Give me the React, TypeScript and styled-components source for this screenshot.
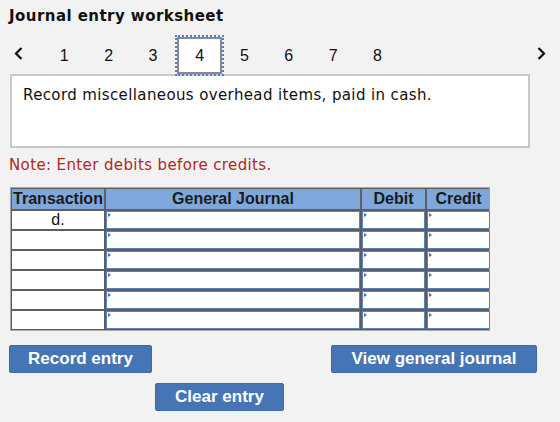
import styled, { createGlobalStyle } from 'styled-components';

const GlobalStyle = createGlobalStyle`
  html, body {
    margin: 0;
    padding: 0;
    background: #f2f2f2;
  }
  body {
    font-family: "DejaVu Sans", Verdana, sans-serif;
    color: #111;
  }
`;

const Page = styled.div`
  width: 560px;
  height: 422px;
  padding: 6px 0 0 0;
  box-sizing: border-box;
`;

const Title = styled.h1`
  margin: 0 0 0 9px;
  font-family: "DejaVu Sans", Verdana, sans-serif;
  font-size: 15px;
  font-weight: bold;
  letter-spacing: 0.45px;
  line-height: 20px;
  color: #111;
`;

const Nav = styled.div`
  display: flex;
  align-items: center;
  height: 37px;
  margin: 11px 0 0 0;
  padding: 0 12px 0 12px;
  font-family: "Liberation Sans", Arial, sans-serif;
`;

const Arrow = styled.span<{ $side: 'left' | 'right' }>`
  width: 30px;
  height: 37px;
  display: flex;
  align-items: center;
  justify-content: ${({ $side }) => ($side === 'left' ? 'flex-start' : 'flex-end')};
  padding: 0 2px 4px;
  box-sizing: border-box;
`;

const Steps = styled.div`
  display: flex;
  flex: 1;
`;

const Step = styled.div<{ $active?: boolean }>`
  width: 44.4px;
  height: 37px;
  display: flex;
  align-items: center;
  justify-content: center;
  font-size: 16px;
  color: #111;
  box-sizing: border-box;
  ${({ $active }) =>
    $active &&
    `
    background: #fff;
    border: 2px solid #8a8a8a;
    outline: 2px dotted #4f7fc4;
    width: 45px;
    margin: 0 0 0 2px;
  `}
`;

const Prompt = styled.div`
  margin: 0 30px 0 10px;
  height: 74px;
  box-sizing: border-box;
  background: #fff;
  border: 2px solid #c9c9c9;
  padding: 10px 11px;
  font-size: 15px;
  letter-spacing: 0.38px;
  line-height: 18px;
  color: #111;
`;

const Note = styled.p`
  margin: 8px 0 0 9px;
  font-size: 15px;
  letter-spacing: 0.38px;
  line-height: 18px;
  color: #b3271f;
`;

const Table = styled.div`
  margin: 13px 0 0 10px;
  width: 480px;
  box-sizing: border-box;
  display: grid;
  grid-template-columns: 92px 254px 63px 63px;
  grid-auto-rows: 18px;
  grid-template-rows: 20px;
  gap: 2px;
  padding: 1px;
  background: #5e5e5e;
  border: 1px solid #a9a9a9;
  font-family: "Liberation Sans", Arial, sans-serif;
`;

const Head = styled.div`
  background: #7ea7dc;
  color: #1a1a1a;
  font-size: 16px;
  font-weight: bold;
  display: flex;
  align-items: center;
  justify-content: center;
  line-height: 20px;
`;

const TxCell = styled.div`
  background: #fff;
  display: flex;
  align-items: center;
  justify-content: center;
  font-size: 16px;
  color: #111;
`;

const EntryCell = styled.div`
  background: #fff;
  border: 1px solid #5a80bd;
  position: relative;

  &::before {
    content: '';
    position: absolute;
    top: 1px;
    left: 1px;
    width: 0;
    height: 0;
    border-top: 2px solid transparent;
    border-bottom: 2px solid transparent;
    border-left: 3px solid #3b6fc2;
  }
`;

const Buttons = styled.div`
  margin: 14px 0 0 9px;
  display: grid;
  grid-template-columns: 146px 176px 206px;
  grid-template-rows: 28px 28px;
  row-gap: 10px;
`;

const Button = styled.button<{ $col: number; $row: number; $width: number }>`
  grid-column: ${({ $col }) => $col};
  grid-row: ${({ $row }) => $row};
  width: ${({ $width }) => $width}px;
  height: 28px;
  background: #4675b5;
  border: 1px solid #3f6aa6;
  border-radius: 2px;
  color: #fff;
  font-family: "Liberation Sans", Arial, sans-serif;
  font-size: 17px;
  font-weight: bold;
  padding: 0;
  cursor: pointer;
`;

const Chevron = ({ dir }: { dir: 'left' | 'right' }) => (
  <svg width="9" height="13" viewBox="0 0 9 13">
    <path
      d={dir === 'left' ? 'M7.5 1 L2 6.5 L7.5 12' : 'M1.5 1 L7 6.5 L1.5 12'}
      fill="none"
      stroke="#111"
      strokeWidth="2.2"
    />
  </svg>
);

const rows = ['d.', '', '', '', '', ''];

export default function App() {
  return (
    <Page>
      <GlobalStyle />
      <Title>Journal entry worksheet</Title>
      <Nav>
        <Arrow $side="left">
          <Chevron dir="left" />
        </Arrow>
        <Steps>
          {[1, 2, 3, 4, 5, 6, 7, 8].map((n) => (
            <Step key={n} $active={n === 4}>
              {n}
            </Step>
          ))}
        </Steps>
        <Arrow $side="right">
          <Chevron dir="right" />
        </Arrow>
      </Nav>
      <Prompt>Record miscellaneous overhead items, paid in cash.</Prompt>
      <Note>Note: Enter debits before credits.</Note>
      <Table>
        <Head>Transaction</Head>
        <Head>General Journal</Head>
        <Head>Debit</Head>
        <Head>Credit</Head>
        {rows.map((t, i) => [
          <TxCell key={`t${i}`}>{t}</TxCell>,
          <EntryCell key={`g${i}`} />,
          <EntryCell key={`d${i}`} />,
          <EntryCell key={`c${i}`} />,
        ])}
      </Table>
      <Buttons>
        <Button $col={1} $row={1} $width={143}>Record entry</Button>
        <Button $col={3} $row={1} $width={206}>View general journal</Button>
        <Button $col={2} $row={2} $width={129}>Clear entry</Button>
      </Buttons>
    </Page>
  );
}
